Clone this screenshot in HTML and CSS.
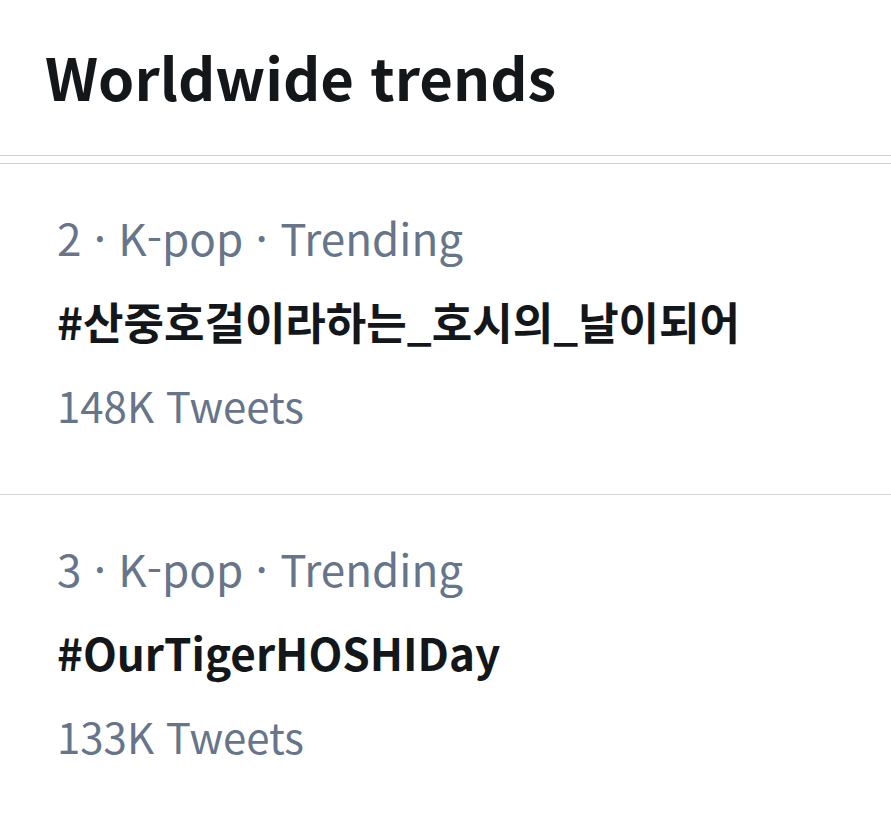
FILE: index.html
```html
<!DOCTYPE html>
<html lang="ko">
<head>
    <meta charset="UTF-8">
    <meta name="viewport" content="width=device-width, initial-scale=1.0">
    <title>Worldwide trends</title>
    <link rel="stylesheet" href="styles.css">
</head>
<body>
    <div class="trends">
        <div class="trends-header">
            <h2>Worldwide trends</h2>
        </div>

        <div class="trend-list">
            <div class="trend">
                <div class="trend-meta">2 · K-pop · Trending</div>
                <div class="trend-name">#산중호걸이라하는_호시의_날이되어</div>
                <div class="trend-count">148K Tweets</div>
            </div>

            <div class="trend">
                <div class="trend-meta">3 · K-pop · Trending</div>
                <div class="trend-name">#OurTigerHOSHIDay</div>
                <div class="trend-count">133K Tweets</div>
            </div>
        </div>
    </div>
</body>
</html>
```

FILE: styles.css
```css
body {
    font-family: "Noto Sans CJK KR", "Noto Sans", sans-serif;
    background-color: #fff;
    margin: 0;
    padding: 0;
}

.trends-header {
    height: 156px;
    box-sizing: border-box;
    padding: 36px 45px 0;
    border-bottom: 1px solid #cfcfcf;
}

.trends-header h2 {
    margin: 0;
    font-size: 58px;
    font-weight: 700;
    line-height: 80px;
    color: #14171a;
}

.trend-list {
    margin-top: 7px;
    border-top: 1px solid #cfcfcf;
}

.trend {
    padding: 31px 57px 0;
    height: 331px;
    box-sizing: border-box;
    border-bottom: 1px solid #d6d6d6;
}

.trend-meta,
.trend-count {
    font-size: 44px;
    line-height: 84px;
    color: #66758a;
}

.trend-count {
    font-size: 42px;
}

.trend-name {
    font-size: 44px;
    line-height: 84px;
    font-weight: 700;
    color: #14171a;
}
```
